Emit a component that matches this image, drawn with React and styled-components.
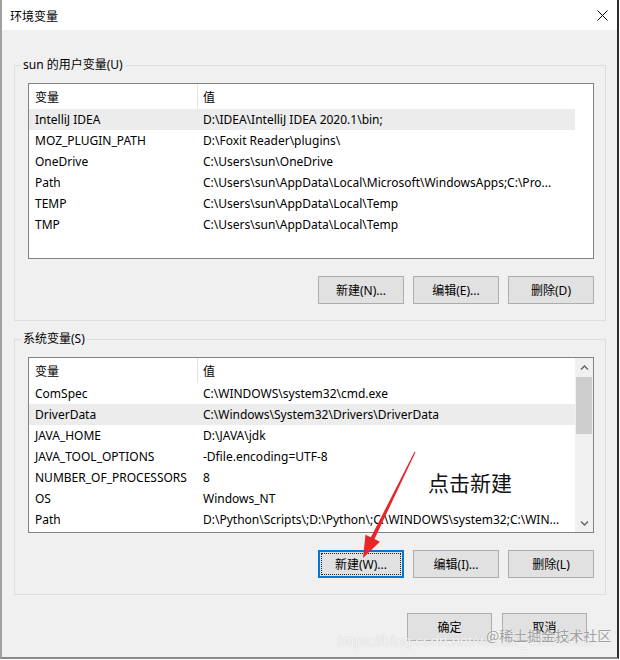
import styled, { createGlobalStyle } from "styled-components";

const GlobalStyle = createGlobalStyle`
  body {
    margin: 0;
    background: #ffffff;
    font-family: "Noto Sans", "Noto Sans CJK SC", sans-serif;
    font-size: 12px;
    color: #000;
  }
`;

const Window = styled.div`
  position: relative;
  width: 619px;
  box-sizing: border-box;
  border-left: 2px solid #a0a0a0;
  border-right: 2px solid #2b2b2b;
  border-bottom: 2px solid #8a8a8a;
`;

const TitleBar = styled.div`
  height: 30px;
  background: #fff;
  display: flex;
  align-items: center;
  justify-content: space-between;
  padding: 0 9px 0 8px;
`;

const Title = styled.span`
  font-size: 12px;
  font-family: "Noto Sans CJK SC", sans-serif;
`;

const Body = styled.div`
  background: #f0f0f0;
  height: 627px;
  box-sizing: border-box;
  padding: 35px 11px 16px 12px;
  display: flex;
  flex-direction: column;
`;

const Group = styled.div`
  border: 1px solid #dcdcdc;
  padding: 0 11px 16px 13px;
  display: flex;
  flex-direction: column;
  margin-top: ${(p) => p.$gap || 0}px;
`;

const GroupLabel = styled.span`
  align-self: flex-start;
  margin: -9px 0 0 -7px;
  padding: 0 2px;
  background: #f0f0f0;
  line-height: 16px;
`;

const ListBox = styled.div`
  margin-top: 10px;
  height: 176px;
  box-sizing: border-box;
  border: 1px solid #828282;
  background: #fff;
  display: flex;
`;

const Table = styled.div`
  flex: 1;
  min-width: 0;
`;

const HeaderRow = styled.div`
  display: grid;
  grid-template-columns: 169px 1fr;
  height: 25px;
`;

const HeadCell = styled.div`
  line-height: 25px;
  padding-left: ${(p) => (p.$first ? 6 : 5)}px;
  border-right: ${(p) => (p.$first ? "1px solid #e5e5e5" : "none")};
  font-family: "Noto Sans CJK SC", sans-serif;
`;

const Row = styled.div`
  display: grid;
  grid-template-columns: 169px 1fr;
  height: 21px;
  background: ${(p) => (p.$selected ? "#ececec" : "transparent")};
`;

const Cell = styled.div`
  line-height: 21px;
  padding-left: ${(p) => (p.$first ? 6 : 5)}px;
  padding-right: 4px;
  white-space: nowrap;
  overflow: hidden;
  text-overflow: ellipsis;
`;

const Spacer = styled.div`
  width: 18px;
`;

const Scrollbar = styled.div`
  width: 18px;
  background: #f0f0f0;
  display: flex;
  flex-direction: column;
`;

const ScrollArrow = styled.div`
  height: 19px;
  display: flex;
  align-items: center;
  justify-content: center;
`;

const Track = styled.div`
  flex: 1;
`;

const Thumb = styled.div`
  height: 57px;
  margin: 0 1px;
  background: #cdcdcd;
`;

const ButtonRow = styled.div`
  display: flex;
  justify-content: flex-end;
  gap: ${(p) => p.$gap || 9}px;
  margin-top: ${(p) => p.$top || 17}px;
  padding-right: ${(p) => p.$right || 0}px;
`;

const Button = styled.button`
  width: ${(p) => p.$width || 86}px;
  height: 28px;
  box-sizing: border-box;
  border: 1px solid ${(p) => (p.$focused ? "#0078d7" : "#adadad")};
  box-shadow: ${(p) => (p.$focused ? "inset 0 0 0 1px #0078d7" : "none")};
  outline: ${(p) => (p.$focused ? "1px dotted #222" : "none")};
  outline-offset: -4px;
  background: #e1e1e1;
  font-family: "Noto Sans", "Noto Sans CJK SC", sans-serif;
  font-size: 12px;
  color: #000;
  padding: 0;
`;

const Overlay = styled.svg`
  position: absolute;
  left: -2px;
  top: 0;
  pointer-events: none;
`;

const Note = styled.div`
  position: absolute;
  left: 426px;
  top: 472px;
  font-family: "Noto Sans CJK SC", sans-serif;
  font-size: 21px;
  line-height: 21px;
  color: #111;
`;

const WatermarkUrl = styled.div`
  position: absolute;
  left: 336px;
  top: 632px;
  font-family: "Liberation Sans", sans-serif;
  font-size: 15px;
  line-height: 18px;
  color: rgba(255, 255, 255, 0.85);
  text-shadow: 0 0 1px #b8b8b8;
  white-space: nowrap;
`;

const WatermarkSite = styled.div`
  position: absolute;
  left: 484px;
  top: 626px;
  font-family: "Noto Sans CJK SC", sans-serif;
  font-size: 14px;
  line-height: 18px;
  color: #a0a0a0;
  text-shadow: 0 0 2px #fff;
  white-space: nowrap;
`;

const userVars = [
  ["IntelliJ IDEA", "D:\\IDEA\\IntelliJ IDEA 2020.1\\bin;"],
  ["MOZ_PLUGIN_PATH", "D:\\Foxit Reader\\plugins\\"],
  ["OneDrive", "C:\\Users\\sun\\OneDrive"],
  ["Path", "C:\\Users\\sun\\AppData\\Local\\Microsoft\\WindowsApps;C:\\Pro..."],
  ["TEMP", "C:\\Users\\sun\\AppData\\Local\\Temp"],
  ["TMP", "C:\\Users\\sun\\AppData\\Local\\Temp"],
];

const systemVars = [
  ["ComSpec", "C:\\WINDOWS\\system32\\cmd.exe"],
  ["DriverData", "C:\\Windows\\System32\\Drivers\\DriverData"],
  ["JAVA_HOME", "D:\\JAVA\\jdk"],
  ["JAVA_TOOL_OPTIONS", "-Dfile.encoding=UTF-8"],
  ["NUMBER_OF_PROCESSORS", "8"],
  ["OS", "Windows_NT"],
  ["Path", "D:\\Python\\Scripts\\;D:\\Python\\;C:\\WINDOWS\\system32;C:\\WIN..."],
];

function Chevron({ down }) {
  return (
    <svg width="9" height="6" viewBox="0 0 9 6">
      <path
        d={down ? "M1 1.5 L4.5 5 L8 1.5" : "M1 4.5 L4.5 1 L8 4.5"}
        fill="none"
        stroke="#606060"
        strokeWidth="1.3"
      />
    </svg>
  );
}

function VarList({ rows, selected, scroll }) {
  return (
    <ListBox>
      <Table>
        <HeaderRow>
          <HeadCell $first>变量</HeadCell>
          <HeadCell>值</HeadCell>
        </HeaderRow>
        {rows.map(([name, value], i) => (
          <Row key={name} $selected={i === selected}>
            <Cell $first>{name}</Cell>
            <Cell>{value}</Cell>
          </Row>
        ))}
      </Table>
      {scroll ? (
        <Scrollbar>
          <ScrollArrow>
            <Chevron />
          </ScrollArrow>
          <Track>
            <Thumb />
          </Track>
          <ScrollArrow>
            <Chevron down />
          </ScrollArrow>
        </Scrollbar>
      ) : (
        <Spacer />
      )}
    </ListBox>
  );
}

export default function App() {
  return (
    <>
      <GlobalStyle />
      <Window>
        <TitleBar>
          <Title>环境变量</Title>
          <svg width="11" height="11" viewBox="0 0 11 11">
            <path d="M0.5 0.5 L10.5 10.5 M10.5 0.5 L0.5 10.5" stroke="#000" strokeWidth="1" />
          </svg>
        </TitleBar>
        <Body>
          <Group>
            <GroupLabel>sun 的用户变量(U)</GroupLabel>
            <VarList rows={userVars} selected={0} />
            <ButtonRow>
              <Button>新建(N)...</Button>
              <Button>编辑(E)...</Button>
              <Button>删除(D)</Button>
            </ButtonRow>
          </Group>
          <Group $gap={18}>
            <GroupLabel>系统变量(S)</GroupLabel>
            <VarList rows={systemVars} selected={1} scroll />
            <ButtonRow>
              <Button $focused>新建(W)...</Button>
              <Button>编辑(I)...</Button>
              <Button>删除(L)</Button>
            </ButtonRow>
          </Group>
          <ButtonRow $gap={10} $top={18} $right={19}>
            <Button $width={85}>确定</Button>
            <Button $width={85}>取消</Button>
          </ButtonRow>
        </Body>
        <Note>点击新建</Note>
        <WatermarkUrl>https://blog.csdn.net/weixin_45990580</WatermarkUrl>
        <WatermarkSite>@稀土掘金技术社区</WatermarkSite>
        <Overlay width="620" height="660" viewBox="0 0 620 660">
          <polygon
            points="414.5,451.8 415.5,452.2 374.5,539.1 379.9,541.7 363,558 365.5,534.7 370.9,537.3"
            fill="#e6262b"
          />
        </Overlay>
      </Window>
    </>
  );
}
